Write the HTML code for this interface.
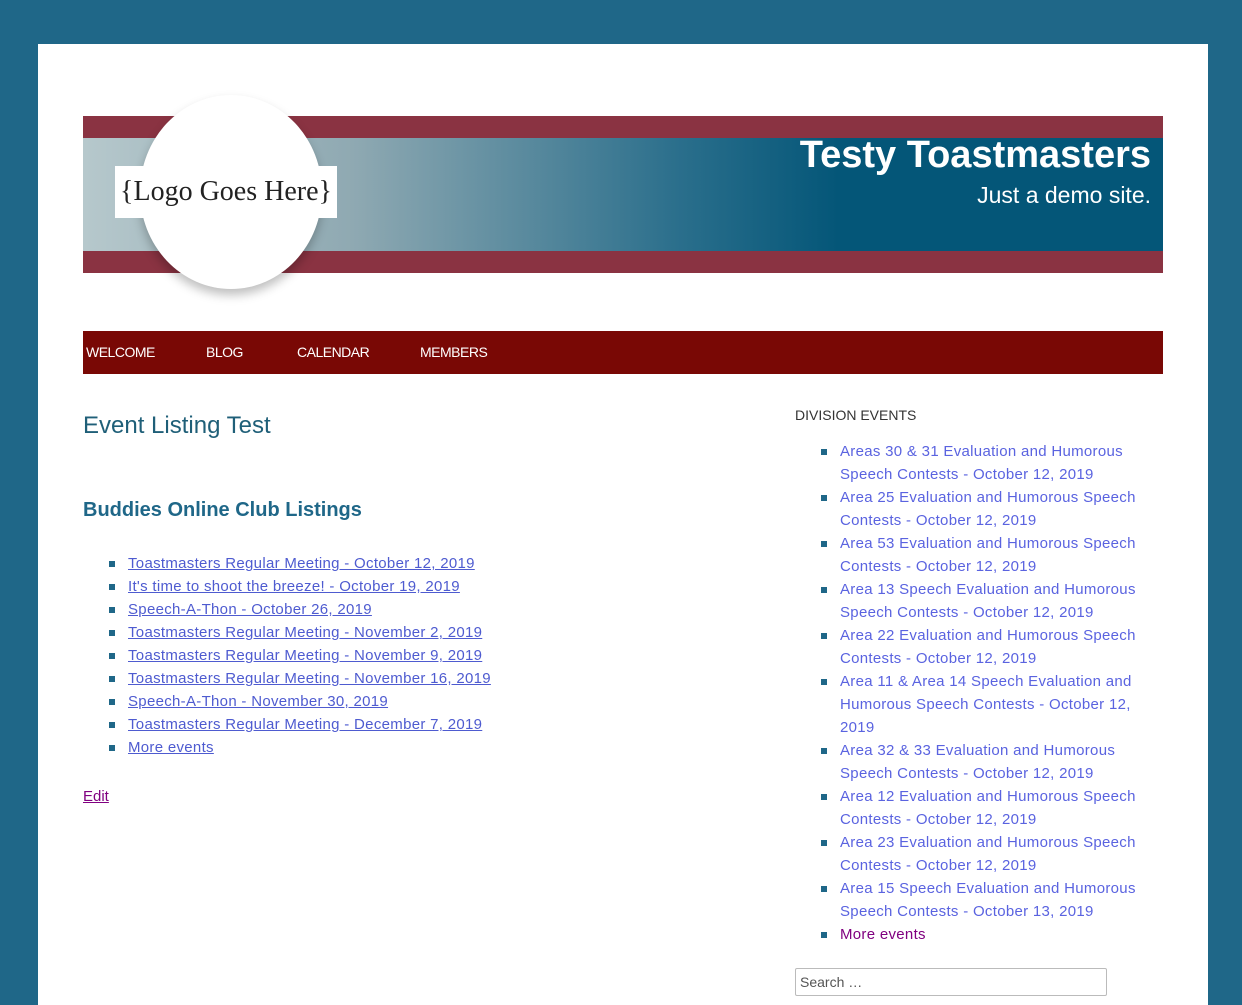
<!DOCTYPE html>
<html><head><meta charset="utf-8"><style>
body{margin:0;background:#1f6788;font-family:"Liberation Sans",sans-serif;}
.page{position:absolute;left:38px;top:44px;width:1170px;height:961px;background:#fff;}
.banner{position:absolute;left:45px;top:72px;width:1080px;height:157px;background:#8a3342;}
.blue{position:absolute;left:0;top:22px;width:1080px;height:113px;background:linear-gradient(90deg,#b6c8cc 0%,#8fa9b2 25%,#5d8c9f 40%,#2b6f8c 55%,#045678 70%,#045678 100%);}
.circle{position:absolute;left:102px;top:51px;width:182px;height:194px;border-radius:50%;background:#fff;box-shadow:0 6px 10px rgba(0,0,0,.25);}
.logo{position:absolute;left:77px;top:122px;width:222px;height:52px;background:#fff;font-family:"Liberation Serif",serif;font-size:28px;color:#222;text-align:center;line-height:52px;white-space:nowrap;}
.t1{position:absolute;right:12px;top:18px;color:#fff;font-weight:bold;font-size:38px;white-space:nowrap;}
.t2{position:absolute;right:12px;top:66px;color:#fff;font-size:23px;white-space:nowrap;}
.nav{position:absolute;left:45px;top:287px;width:1080px;height:43px;background:#790805;}
.nav span{position:absolute;top:13px;color:#fff;font-size:14px;letter-spacing:-.5px;}
h1{position:absolute;left:45px;top:368px;margin:0;font-weight:normal;font-size:24px;color:#1f5f78;}
h2{position:absolute;left:45px;top:455px;margin:0;font-size:20px;color:#1f6788;}
ul{margin:0;padding:0;list-style:none;position:absolute;}
li{position:relative;white-space:nowrap;}
li:before{content:"";position:absolute;left:-19px;top:9px;width:6px;height:6px;background:#1f6788;}
.main{left:90px;top:508px;font-size:15px;line-height:23px;letter-spacing:.3px;}
.main a{color:#4e5bd0;text-decoration:underline;}
.side{left:802px;top:396px;font-size:15px;line-height:23px;color:#5a63e0;letter-spacing:.3px;}
.edit{position:absolute;left:45px;top:744px;color:#800080;font-size:15px;text-decoration:underline;}
.dh{position:absolute;left:757px;top:363px;font-size:14px;color:#333;}
.search{position:absolute;left:757px;top:924px;width:306px;height:26px;border:1px solid #bbb;border-radius:2px;font-size:14px;color:#555;line-height:26px;padding-left:4px;}
</style></head><body><div class="page">
<div class="banner"><div class="blue"></div>
<div class="t1">Testy Toastmasters</div><div class="t2">Just a demo site.</div></div>
<div class="circle"></div>
<div class="logo">{Logo Goes Here}</div>
<div class="nav"><span style="left:3px">WELCOME</span><span style="left:123px">BLOG</span><span style="left:214px">CALENDAR</span><span style="left:337px">MEMBERS</span></div>
<h1>Event Listing Test</h1>
<h2>Buddies Online Club Listings</h2>
<ul class="main">
<li><a>Toastmasters Regular Meeting - October 12, 2019</a></li>
<li><a>It's time to shoot the breeze! - October 19, 2019</a></li>
<li><a>Speech-A-Thon - October 26, 2019</a></li>
<li><a>Toastmasters Regular Meeting - November 2, 2019</a></li>
<li><a>Toastmasters Regular Meeting - November 9, 2019</a></li>
<li><a>Toastmasters Regular Meeting - November 16, 2019</a></li>
<li><a>Speech-A-Thon - November 30, 2019</a></li>
<li><a>Toastmasters Regular Meeting - December 7, 2019</a></li>
<li><a>More events</a></li>
</ul>
<a class="edit">Edit</a>
<div class="dh">DIVISION EVENTS</div>
<ul class="side">
<li>Areas 30 &amp; 31 Evaluation and Humorous<br>Speech Contests - October 12, 2019</li>
<li>Area 25 Evaluation and Humorous Speech<br>Contests - October 12, 2019</li>
<li>Area 53 Evaluation and Humorous Speech<br>Contests - October 12, 2019</li>
<li>Area 13 Speech Evaluation and Humorous<br>Speech Contests - October 12, 2019</li>
<li>Area 22 Evaluation and Humorous Speech<br>Contests - October 12, 2019</li>
<li>Area 11 &amp; Area 14 Speech Evaluation and<br>Humorous Speech Contests - October 12,<br>2019</li>
<li>Area 32 &amp; 33 Evaluation and Humorous<br>Speech Contests - October 12, 2019</li>
<li>Area 12 Evaluation and Humorous Speech<br>Contests - October 12, 2019</li>
<li>Area 23 Evaluation and Humorous Speech<br>Contests - October 12, 2019</li>
<li>Area 15 Speech Evaluation and Humorous<br>Speech Contests - October 13, 2019</li>
<li style="color:#800080">More events</li>
</ul>
<div class="search">Search …</div>
</div></body></html>
